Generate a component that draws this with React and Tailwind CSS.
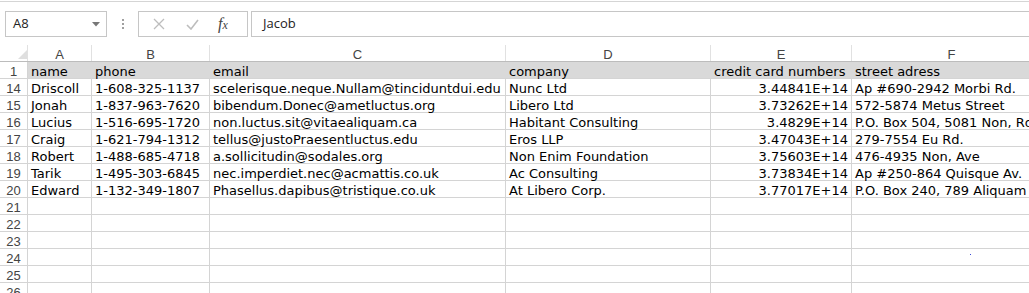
const cols = [
  { key: 'A', w: 'w-[64px]' },
  { key: 'B', w: 'w-[118px]' },
  { key: 'C', w: 'w-[296px]' },
  { key: 'D', w: 'w-[205px]' },
  { key: 'E', w: 'w-[141px]' },
  { key: 'F', w: 'w-[200px]' },
];

const header = ['name', 'phone', 'email', 'company', 'credit card numbers', 'street adress'];

const rows = [
  [14, 'Driscoll', '1-608-325-1137', 'scelerisque.neque.Nullam@tinciduntdui.edu', 'Nunc Ltd', '3.44841E+14', 'Ap #690-2942 Morbi Rd.'],
  [15, 'Jonah', '1-837-963-7620', 'bibendum.Donec@ametluctus.org', 'Libero Ltd', '3.73262E+14', '572-5874 Metus Street'],
  [16, 'Lucius', '1-516-695-1720', 'non.luctus.sit@vitaealiquam.ca', 'Habitant Consulting', '3.4829E+14', 'P.O. Box 504, 5081 Non, Rd.'],
  [17, 'Craig', '1-621-794-1312', 'tellus@justoPraesentluctus.edu', 'Eros LLP', '3.47043E+14', '279-7554 Eu Rd.'],
  [18, 'Robert', '1-488-685-4718', 'a.sollicitudin@sodales.org', 'Non Enim Foundation', '3.75603E+14', '476-4935 Non, Ave'],
  [19, 'Tarik', '1-495-303-6845', 'nec.imperdiet.nec@acmattis.co.uk', 'Ac Consulting', '3.73834E+14', 'Ap #250-864 Quisque Av.'],
  [20, 'Edward', '1-132-349-1807', 'Phasellus.dapibus@tristique.co.uk', 'At Libero Corp.', '3.77017E+14', 'P.O. Box 240, 789 Aliquam Rd.'],
];

const empty = [21, 22, 23, 24, 25, 26];

const dataFont = { fontFamily: '"DejaVu Sans", Verdana, sans-serif' };

const RowNum = ({ n }) => (
  <div className="w-[28px] shrink-0 h-[17px] border-b border-r border-[#d4d4d4] text-[13px] leading-[19px] text-[#444] text-center font-['Liberation_Sans',sans-serif]">
    {n}
  </div>
);

const App = () => {
  return (
    <div className="relative w-[1029px] h-[293px] overflow-hidden bg-white">
      {/* formula bar */}
      <div className="mt-px border-t border-[#d5d5d5] h-[44px] flex items-start pt-[9px] pl-[5px]">
        <div className="w-[102px] h-[26px] border border-[#c6c6c6] flex items-center justify-between pl-[7px] pr-[6px]">
          <span className="text-[13px] text-[#222] font-['Open_Sans',sans-serif]">A8</span>
          <svg width="8" height="5" viewBox="0 0 8 5">
            <path d="M0 0h8L4 4.5z" fill="#777" />
          </svg>
        </div>
        <div className="w-[31px] h-[26px] flex flex-col items-center justify-center gap-[2px]">
          <span className="w-[2px] h-[2px] bg-[#a0a0a0]" />
          <span className="w-[2px] h-[2px] bg-[#a0a0a0]" />
          <span className="w-[2px] h-[2px] bg-[#a0a0a0]" />
        </div>
        <div className="w-[110px] h-[26px] border border-[#c6c6c6] flex items-center">
          <svg className="ml-[14px]" width="12" height="12" viewBox="0 0 12 12">
            <path d="M1 1l10 10M11 1L1 11" stroke="#bdbdbd" strokeWidth="1.3" fill="none" />
          </svg>
          <svg className="ml-[21px]" width="13" height="11" viewBox="0 0 13 11">
            <path d="M1 6l4 4 7-9" stroke="#bdbdbd" strokeWidth="1.6" fill="none" />
          </svg>
          <span className="ml-[19px] text-[16px] leading-none italic text-[#444] font-['Liberation_Serif',serif]">
            f<span className="text-[12px]">x</span>
          </span>
        </div>
        <div className="ml-[3px] flex-1 h-[26px] border border-[#c6c6c6] border-r-0 flex items-center pl-[11px]">
          <span className="text-[13px] text-[#222] font-['Open_Sans',sans-serif]">Jacob</span>
        </div>
      </div>

      {/* column headers */}
      <div className="flex h-[17px] border-b border-[#bcbcbc]">
        <div className="w-[28px] shrink-0 border-r border-[#e1e1e1] relative">
          <svg className="absolute left-[18px] top-[5px]" width="9" height="9" viewBox="0 0 9 9">
            <path d="M9 0v9H0z" fill="#dfdfdf" />
          </svg>
        </div>
        {cols.map((c) => (
          <div
            key={c.key}
            className={`${c.w} shrink-0 border-r border-[#e1e1e1] text-center text-[13px] leading-[19px] text-[#444] font-['Liberation_Sans',sans-serif]`}
          >
            {c.key}
          </div>
        ))}
      </div>

      {/* header data row */}
      <div className="flex" style={dataFont}>
        <RowNum n={1} />
        <div className="flex h-[17px] flex-1 bg-[#d9d9d9] border-b border-[#d4d4d4] text-[13px] leading-[20px] text-black">
          {cols.map((c, i) => (
            <div key={c.key} className={`${c.w} shrink-0 h-[16px] whitespace-nowrap pl-[3px]`}>
              {header[i]}
            </div>
          ))}
        </div>
      </div>

      {rows.map((r) => (
        <div key={r[0]} className="flex text-[13px] leading-[20px] text-black" style={dataFont}>
          <RowNum n={r[0]} />
          {cols.map((c, i) => (
            <div
              key={c.key}
              className={`${c.w} shrink-0 h-[17px] border-b border-r border-[#d4d4d4] whitespace-nowrap ${
                i === 4 ? 'text-right pr-[3px]' : 'pl-[3px]'
              }`}
            >
              {r[i + 1]}
            </div>
          ))}
        </div>
      ))}

      {empty.map((n) => (
        <div key={n} className="flex" style={dataFont}>
          <RowNum n={n} />
          {cols.map((c) => (
            <div key={c.key} className={`${c.w} shrink-0 h-[17px] border-b border-r border-[#d4d4d4]`} />
          ))}
        </div>
      ))}

      <span className="absolute left-[970px] top-[254px] w-px h-px bg-[#3b4ad8]" />
    </div>
  );
};

export default App;
